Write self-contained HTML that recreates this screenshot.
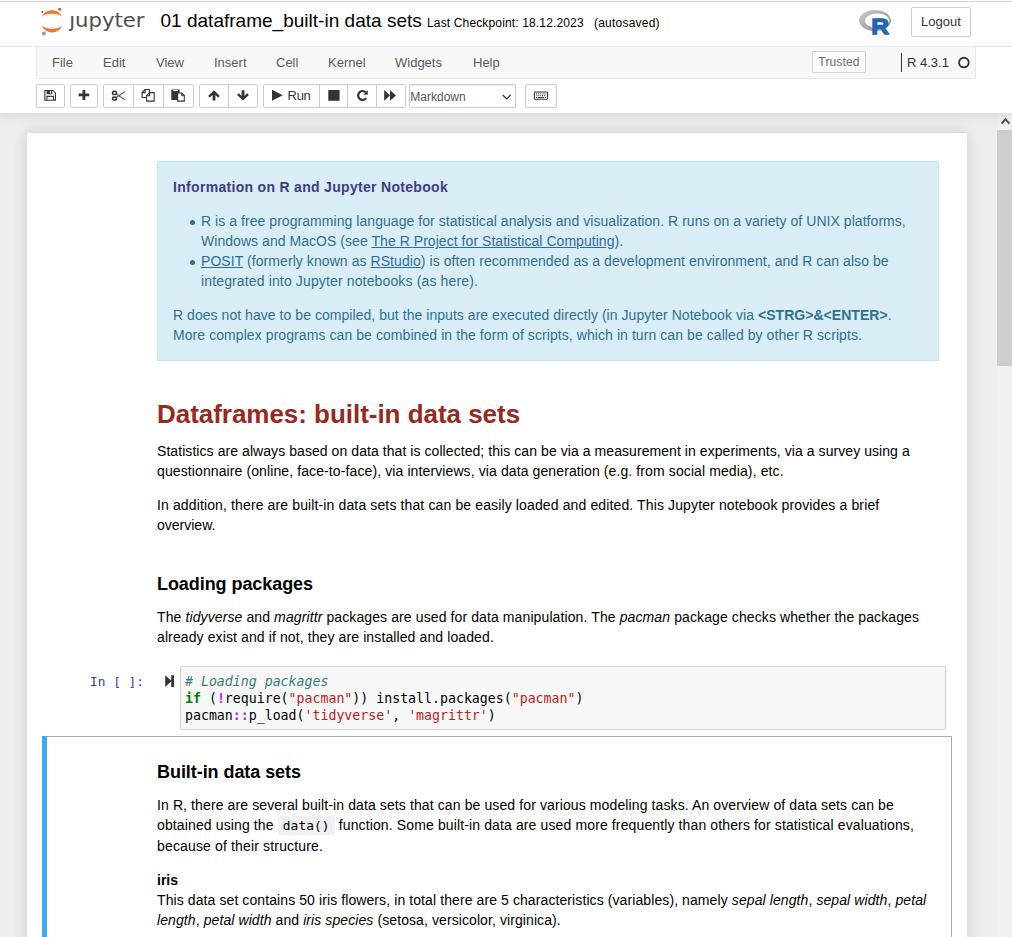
<!DOCTYPE html>
<html lang="en">
<head>
<meta charset="utf-8">
<title>01 dataframe_built-in data sets - Jupyter Notebook</title>
<style>
*{box-sizing:border-box}
html,body{margin:0;padding:0}
body{width:1012px;height:937px;overflow:hidden;position:relative;background:#eee;
  font-family:"Liberation Sans",Arial,Helvetica,sans-serif;font-size:13px;line-height:1.42857;color:#000}
a{color:#337ab7}
/* ---------- header ---------- */
#header{position:absolute;left:0;top:0;width:1012px;height:113px;background:#fff;z-index:10;
  box-shadow:0 0 12px 1px rgba(87,87,87,.2)}
#topline{position:absolute;left:0;top:1px;width:1012px;height:1px;background:#d0d0d0}
#hline{position:absolute;left:0;top:46px;width:1012px;height:1px;background:#e7e7e7}
#nbname{position:absolute;left:160.500px;top:9px;font-size:19px;line-height:24px;white-space:nowrap;color:#000}
#ckpt{position:absolute;left:427px;top:15px;font-size:12px;line-height:16px;white-space:nowrap;color:#000}
#autosv{position:absolute;left:594px;top:15px;font-size:12px;line-height:16px;white-space:nowrap;color:#000}
#rlogo{position:absolute;left:858px;top:9px;width:34px;height:27px}
#logout{position:absolute;left:911px;top:7px;width:60px;height:30px;border:1px solid #ccc;border-radius:2px;
  background:#fff;color:#333;font-size:13px;line-height:28px;text-align:center}
/* menubar */
#menubar{position:absolute;left:36px;top:47px;width:940px;height:32px;background:#f8f8f8;
  border:1px solid #e7e7e7;border-top:0;border-radius:0 0 2px 2px}
#menubar .mi{position:absolute;top:1px;height:30px;line-height:30px;font-size:13px;color:#5a5a5a;white-space:nowrap}
#trusted{position:absolute;left:775px;top:4px;width:54px;height:22px;border:1px solid #d4d4d4;border-radius:1px;
  background:#fcfcfc;color:#6e6e6e;font-size:12px;line-height:20px;text-align:center;letter-spacing:.15px}
#kbar{position:absolute;left:864px;top:6px;width:1px;height:19px;background:#333}
#kname{position:absolute;left:870px;top:1px;height:30px;line-height:30px;font-size:13px;color:#333;white-space:nowrap}
#kind{position:absolute;left:921px;top:10px;width:12px;height:12px;border:1.700px solid #333;border-radius:50%}
/* toolbar */
.tb{position:absolute;top:84px;height:24px;border:1px solid #ccc;background:#fff;border-radius:2px;color:#333}
.tb.l{border-radius:2px 0 0 2px}
.tb.m{border-radius:0}
.tb.r{border-radius:0 2px 2px 0}
.tb svg{position:absolute;left:0;top:0}

#runlbl{position:absolute;left:23.600px;top:0;line-height:22px;font-size:13px;color:#333;letter-spacing:-.3px}
#celltype{position:absolute;left:409px;top:84px;width:107px;height:24px;border:1px solid #ccc;border-radius:2px;background:#fff;
  color:#555;font-size:12px;line-height:23px;padding-left:.300px;padding-top:1px;box-shadow:inset 0 1px 1px rgba(0,0,0,.075)}
#icons{position:absolute;left:0;top:0;pointer-events:none}
/* ---------- site ---------- */
#site{position:absolute;left:0;top:113px;width:997px;height:824px;background:#eee;overflow:hidden}
#sb{position:absolute;left:997px;top:113px;width:15px;height:824px;background:#f1f1f1}
#sbthumb{position:absolute;left:0;top:17px;width:15px;height:236px;background:#cdcdcd}
#nbc{position:absolute;left:27px;top:20px;width:940px;height:900px;background:#fff;
  box-shadow:0 0 12px 1px rgba(87,87,87,.2)}

#nbc{padding:15px}
.cell{position:relative;display:flex;border:1px solid transparent;padding:5px;width:910px}
.prompt{flex:none;width:102px;font-family:"DejaVu Sans Mono","Liberation Mono",monospace;font-size:12.8px;line-height:17px;padding:6px 5px 0 0;text-align:right;color:#303F9F;white-space:nowrap}
.rh{flex:1;padding:7px 7px 7px 7px;font-size:14px;line-height:20px;color:#000;min-width:0}
.rh p{margin:14px 0 0 0}
.rh>.alert{margin-top:0}
.rh h1{font-size:26px;line-height:26px;font-weight:bold;margin:14px 0 0 0;color:#97291F}
.rh h3{font-size:18px;line-height:18px;font-weight:bold;margin:14px 0 0 0;color:#000}
.rh a{text-decoration:underline;color:#2d6ca2}
.rh ul{margin:14px 0 0 0;padding-left:28px;list-style:none}
.rh li{position:relative}
.rh li:before{content:"";position:absolute;left:-11.500px;top:8.500px;width:5px;height:5px;border-radius:50%;background:#31708f}
.rh code{font-family:"DejaVu Sans Mono","Liberation Mono",monospace;font-size:12.8px;line-height:21px;background:#eff0f1;padding:2px 5px 2px 5px;border-radius:3px;color:#000}
.alert{background:#d9edf7;border:1px solid #bce8f1;border-radius:2px;color:#31708f;padding:15px}
.alert .at{color:#403c84}
.alert>:first-child{margin-top:0}
.cell.code{padding-right:5px}
.prompt.inp{width:132px;padding:7px 36px 0 0}
.rtc{position:absolute;left:122px;top:13.800px}
.ia{flex:1;border:1px solid #cfcfcf;border-radius:2px;background:#f7f7f7;padding:6px 4px 5px 4px;min-width:0}
.ia pre{margin:0;font-family:"DejaVu Sans Mono","Liberation Mono",monospace;font-size:13.24px;line-height:17px;color:#000}
.c{color:#348080;font-style:italic}
.k{color:#008000;font-weight:bold}
.s{color:#BA2121}
.o{color:#AA22FF;font-weight:bold}
.cell.sel .rh{padding-bottom:80px}
.cell.sel{border-color:#ababab;border-left-width:1px;background:#fff}
.cell.sel:before{content:"";position:absolute;left:-1px;top:-1px;width:5px;height:calc(100% + 2px);background:#42A5F5}
.ln{white-space:nowrap}
.rh p,.rh li,.rh h1,.rh h3{white-space:nowrap}
/*LS*/
#t0{letter-spacing:0.3056px}
#a1{letter-spacing:0.0526px}
#a2{letter-spacing:0.0476px}
#a3{letter-spacing:0.0693px}
#a4{letter-spacing:0.1395px}
#a5{letter-spacing:0.0463px}
#a6{letter-spacing:0.0741px}
#h1{letter-spacing:-0.0345px}
#b1{letter-spacing:0.0667px}
#b2{letter-spacing:0.1068px}
#b3{letter-spacing:0.1282px}
#b4{letter-spacing:0.0000px}
#h3a{letter-spacing:-0.0667px}
#c1{letter-spacing:0.1062px}
#c2{letter-spacing:0.1091px}
#h3b{letter-spacing:-0.0588px}
#d1{letter-spacing:0.1102px}
#d2{letter-spacing:0.1261px}
#d3{letter-spacing:0.1538px}
#d4{letter-spacing:-0.0000px}
#d5{letter-spacing:0.0938px}
#d6{letter-spacing:0.0882px}
#nbname{letter-spacing:0.0133px}
#ckpt{letter-spacing:0.1462px}
#autosv{letter-spacing:0.2200px}
/*ENDLS*/
</style>
</head>
<body>
<div id="site">
  <div id="nbc">
  
  <div class="cell"><div class="prompt"></div><div class="rh">
    <div class="alert">
      <p class="at"><b class="ln" id="t0">Information on R and Jupyter Notebook</b></p>
      <ul>
        <li><span class="ln" id="a1">R is a free programming language for statistical analysis and visualization. R runs on a variety of UNIX platforms,</span><br><span class="ln" id="a2">Windows and MacOS (see <a>The R Project for Statistical Computing</a>).</span></li>
        <li><span class="ln" id="a3"><a>POSIT</a> (formerly known as <a>RStudio</a>) is often recommended as a development environment, and R can also be</span><br><span class="ln" id="a4">integrated into Jupyter notebooks (as here).</span></li>
      </ul>
      <p><span class="ln" id="a5">R does not have to be compiled, but the inputs are executed directly (in Jupyter Notebook via <b>&lt;STRG&gt;&amp;&lt;ENTER&gt;</b>.</span><br><span class="ln" id="a6">More complex programs can be combined in the form of scripts, which in turn can be called by other R scripts.</span></p>
    </div>
  </div></div>

  <div class="cell"><div class="prompt"></div><div class="rh">
    <h1><span class="ln" id="h1">Dataframes: built-in data sets</span></h1>
    <p><span class="ln" id="b1">Statistics are always based on data that is collected; this can be via a measurement in experiments, via a survey using a</span><br><span class="ln" id="b2">questionnaire (online, face-to-face), via interviews, via data generation (e.g. from social media), etc.</span></p>
    <p><span class="ln" id="b3">In addition, there are built-in data sets that can be easily loaded and edited. This Jupyter notebook provides a brief</span><br><span class="ln" id="b4">overview.</span></p>
  </div></div>

  <div class="cell"><div class="prompt"></div><div class="rh">
    <h3><span class="ln" id="h3a">Loading packages</span></h3>
    <p><span class="ln" id="c1">The <em>tidyverse</em> and <em>magrittr</em> packages are used for data manipulation. The <em>pacman</em> package checks whether the packages</span><br><span class="ln" id="c2">already exist and if not, they are installed and loaded.</span></p>
  </div></div>

  <div class="cell code"><div class="prompt inp">In&nbsp;[&nbsp;]:</div><svg class="rtc" width="10" height="13" viewBox="0 0 10 13"><path fill="#333" d="M.2 .2l6.400 5.900-6.400 5.900zM6.200 .2h2.800v11.800h-2.800z"/></svg>
    <div class="ia"><pre><span class="c">#&nbsp;Loading&nbsp;packages</span>
<span class="k">if</span> (<span class="o">!</span>require(<span class="s">"pacman"</span>)) install.packages(<span class="s">"pacman"</span>)
pacman<span class="o">::</span>p_load(<span class="s">'tidyverse'</span>, <span class="s">'magrittr'</span>)</pre></div>
  </div>

  <div class="cell sel"><div class="prompt"></div><div class="rh">
    <h3><span class="ln" id="h3b">Built-in data sets</span></h3>
    <p><span class="ln" id="d1">In R, there are several built-in data sets that can be used for various modeling tasks. An overview of data sets can be</span><br><span class="ln" id="d2">obtained using the <code>data()</code> function. Some built-in data are used more frequently than others for statistical evaluations,</span><br><span class="ln" id="d3">because of their structure.</span></p>
    <p><strong class="ln" id="d4">iris</strong><br><span class="ln" id="d5">This data set contains 50 iris flowers, in total there are 5 characteristics (variables), namely <em>sepal length</em>, <em>sepal width</em>, <em>petal</em></span><br><span class="ln" id="d6"><em>length</em>, <em>petal width</em> and <em>iris species</em> (setosa, versicolor, virginica).</span></p>
  </div></div>
  </div>
</div>
<div id="sb"><div id="sbthumb"></div><svg width="15" height="17" viewBox="997 113 15 17" style="position:absolute;left:0;top:0"><path d="M1001.600 123.600l3.900-4.400 3.900 4.400" fill="none" stroke="#505050" stroke-width="2"/></svg></div>
<div id="header">
  <div id="topline"></div>
  <div id="hline"></div>
  <svg id="logo" width="120" height="40" viewBox="36 2 120 40" style="position:absolute;left:36px;top:2px;width:120px;height:40px">
    <path fill="#F37726" d="M41.9 16.8C43.2 12.9 47.3 10.2 52 10.2s8.800 2.700 10 6.600C60.200 14.900 56.400 13.700 52 13.700s-8.200 1.200-10.100 3.100z"/>
    <path fill="#F37726" d="M41.900 25.300C43.200 29.500 47.300 32.500 52 32.500s8.800-3 10-7.200C60.200 27.500 56.400 28.900 52 28.900s-8.200-1.400-10.100-3.600z"/>
    <circle cx="59.800" cy="9.300" r="1.500" fill="#767677"/>
    <circle cx="42.200" cy="12.100" r="1" fill="#616262"/>
    <circle cx="43.800" cy="33.500" r="1.900" fill="#989798"/>
    <text x="69.200" y="26.800" font-family="'DejaVu Sans','Liberation Sans',sans-serif" font-size="19.800" fill="#4E4E4E" textLength="75.300" lengthAdjust="spacingAndGlyphs">jupyter</text>
    <rect x="68" y="8" width="7" height="7" fill="#fff"/>
  </svg>
  <div id="nbname" class="ln">01 dataframe_built-in data sets</div>
  <div id="ckpt" class="ln">Last Checkpoint: 18.12.2023</div>
  <div id="autosv" class="ln">(autosaved)</div>
  <svg id="rlogo" viewBox="858 9 34 27" width="34" height="27">
    <defs>
      <linearGradient id="rg" x1="0" y1="0" x2="1" y2="1"><stop offset="0" stop-color="#CDCFD1"/><stop offset="1" stop-color="#85848C"/></linearGradient>
    </defs>
    <path fill="url(#rg)" fill-rule="evenodd" d="M875 9.900c8.800 0 16 4.700 16 10.500s-7.200 10.500-16 10.500-16-4.700-16-10.500 7.200-10.500 16-10.500zM877.300 13.500c-6.800 0-12.400 3.300-12.400 7.300s5.600 7.300 12.400 7.300 12.100-3.300 12.100-7.300-5.300-7.300-12.100-7.300z"/>
    <text x="871.200" y="33.700" font-family="'Liberation Sans',Arial,sans-serif" font-weight="bold" font-size="22.800" fill="#2165B6" stroke="#2165B6" stroke-width="1.300" stroke-linejoin="miter" textLength="17.800" lengthAdjust="spacingAndGlyphs">R</text>
  </svg>
  <div id="logout">Logout</div>
  <div id="menubar">
    <span class="mi" style="left:15px">File</span>
    <span class="mi" style="left:66px">Edit</span>
    <span class="mi" style="left:119px">View</span>
    <span class="mi" style="left:177px">Insert</span>
    <span class="mi" style="left:239px">Cell</span>
    <span class="mi" style="left:291px">Kernel</span>
    <span class="mi" style="left:358px">Widgets</span>
    <span class="mi" style="left:436px">Help</span>
    <div id="trusted">Trusted</div>
    <div id="kbar"></div>
    <div id="kname">R 4.3.1</div>
  </div>
  
  <div class="tb" style="left:36px;width:29px"></div>
  <div class="tb" style="left:70px;width:28px"></div>
  <div class="tb l" style="left:103px;width:31px"></div>
  <div class="tb m" style="left:133px;width:31px"></div>
  <div class="tb r" style="left:163px;width:31px"></div>
  <div class="tb l" style="left:199px;width:30px"></div>
  <div class="tb r" style="left:228px;width:30px"></div>
  <div class="tb l" style="left:263px;width:57px"><span id="runlbl">Run</span></div>
  <div class="tb m" style="left:319px;width:29px"></div>
  <div class="tb m" style="left:347px;width:30px"></div>
  <div class="tb r" style="left:376px;width:30px"></div>
  <div id="celltype">Markdown</div>
  <div class="tb" style="left:525px;width:32px"></div>
  <svg id="icons" width="1012" height="113" viewBox="0 0 1012 113">
    <circle cx="963.900" cy="62.600" r="4.800" fill="none" stroke="#333" stroke-width="1.900"/>
    <!-- save -->
    <g fill="#333">
      <path d="M44.3 90.4a.5.5 0 0 1 .5-.5h8.2l3 3v7.4a.5.5 0 0 1-.5.5H44.8a.5.5 0 0 1-.5-.5z"/>
      <path fill="#fff" d="M45.4 91h1.3v3.2h5.6V91h.5l2.1 2.1v6.6h-.9v-3.9h-7.7v3.9h-.9z"/>
      <rect x="47.4" y="96.9" width="5.6" height="2.8" fill="#fff"/>
      <rect x="49.9" y="91" width="1.3" height="2.3" fill="#fff"/>
    </g>
    <!-- plus -->
    <path fill="#333" d="M82.5 89.9h2.8v3.7h3.9v2.7h-3.9v3.7h-2.8v-3.7h-3.9v-2.7h3.9z"/>
    <!-- scissors -->
    <g fill="none" stroke="#333" stroke-width="1.500">
      <ellipse cx="114.500" cy="92.900" rx="2" ry="1.700"/>
      <ellipse cx="114.500" cy="98.600" rx="2" ry="1.700"/>
      <path d="M116.200 94L125 99.900M116.200 97.500L125 91.600" stroke-width="1.100" stroke="#555"/>
    </g>
    <!-- copy -->
    <g fill="#fff" stroke="#333" stroke-width="1.1">
      <path d="M145 89.5h4.4v8h-7.3v-5z"/>
      <path d="M142.1 92.6h3v-3" fill="none"/>
      <path d="M149.6 92.6h4.6v8.5h-7.6v-5.4z"/>
      <path d="M146.6 95.8h3.1v-3.2" fill="none"/>
    </g>
    <!-- paste -->
    <g>
      <rect x="171.3" y="89.4" width="8.4" height="10.6" rx=".6" fill="#333"/>
      <rect x="173.2" y="89.9" width="4.7" height="1.2" fill="#fff"/>
      <path d="M177.6 93h4.2l2.5 2.5v5.6h-6.7z" fill="#fff" stroke="#333" stroke-width="1.1"/>
      <path d="M181.6 93v2.7h2.7" fill="none" stroke="#333" stroke-width="1"/>
    </g>
    <!-- arrow up -->
    <path fill="#333" d="M214 90.2l5.9 5.7-1.7 1.7-2.8-2.7v5.7h-2.8v-5.7l-2.8 2.7-1.7-1.7z"/>
    <!-- arrow down -->
    <path fill="#333" d="M243 100.6l5.9-5.7-1.7-1.7-2.8 2.7v-5.7h-2.8v5.7l-2.8-2.7-1.7 1.7z"/>
    <!-- play -->
    <path fill="#333" d="M272 89.8l10.8 5.5-10.8 5.5z"/>
    <!-- stop -->
    <rect x="328.3" y="89.9" width="11.3" height="10.9" rx=".6" fill="#333"/>
    <!-- repeat -->
    <path fill="none" stroke="#333" stroke-width="2.200" d="M366.200 98.200a4.500 4.500 0 1 1-.400-5.900"/>
    <path fill="#333" d="M367.8 90.2v4.6h-4.6z"/>
    <!-- forward -->
    <path fill="#333" d="M384.2 90l5.8 5.4-5.8 5.4zM390 90l6 5.4-6 5.4z"/>
    <!-- chevron -->
    <path fill="none" stroke="#333" stroke-width="1.3" d="M502.800 95l3.900 3.900 3.900-3.900"/>
    <!-- keyboard -->
    <g>
      <rect x="534.4" y="92" width="13.2" height="7.2" rx=".8" fill="#fff" stroke="#333" stroke-width="1.1"/>
      <path stroke="#333" stroke-width="1" stroke-dasharray="1 .9" d="M536 93.9h10.2M536.4 95.7h9.6"/>
      <path stroke="#333" stroke-width="1" d="M536 97.5h1.2M538 97.5h6M544.8 97.5h1.3"/>
    </g>
  </svg>

</div>
</body>
</html>
